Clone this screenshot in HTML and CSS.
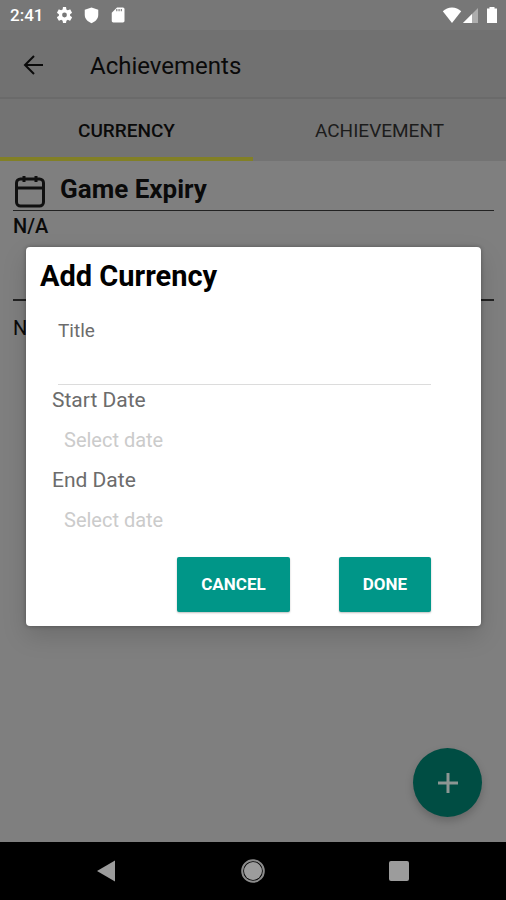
FILE: index.html
```html
<!DOCTYPE html>
<html lang="en">
<head>
<meta charset="utf-8">
<meta name="viewport" content="width=device-width, initial-scale=1">
<title>Achievements</title>
<link rel="stylesheet" href="styles.css">
</head>
<body>
<div class="screen">
  <div class="status">
    <span class="clock">2:41</span>
    <svg class="status-icon" viewBox="0 0 24 24" aria-hidden="true"><path d="M19.4 13c.1-.3.1-.7.1-1s0-.7-.1-1l2.400-1.800c.2-.2.300-.5.100-.7l-2.200-3.800c-.1-.2-.4-.3-.6-.2l-2.700 1.100c-.6-.4-1.200-.8-1.900-1.100L14.100 1.600c0-.2-.2-.4-.5-.4h-3.200c-.3 0-.5.2-.5.4L9.500 4.500c-.7.300-1.300.600-1.900 1.100L4.900 4.500c-.2-.1-.5 0-.6.2L2.100 8.500c-.1.200-.1.500.1.700L4.600 11c-.1.300-.1.700-.1 1s0 .7.1 1l-2.400 1.800c-.2.200-.3.500-.1.700l2.200 3.800c.1.200.4.300.6.200l2.700-1.100c.6.400 1.200.8 1.900 1.100l.4 2.900c0 .2.200.4.500.4h3.200c.3 0 .5-.2.500-.4l.4-2.900c.7-.3 1.300-.6 1.900-1.100l2.700 1.100c.2.100.5 0 .6-.2l2.200-3.800c.1-.2.1-.5-.1-.7zM12 15.200a3.200 3.200 0 1 1 0-6.400 3.200 3.200 0 0 1 0 6.400z" fill-rule="evenodd"/></svg>
    <svg class="status-icon" viewBox="0 0 24 24" aria-hidden="true"><path d="M12 2 3 5v7c0 5 4 9 9 11 5-2 9-6 9-11V5z"/></svg>
    <svg class="status-icon" viewBox="0 0 24 24" aria-hidden="true"><path d="M18 2h-8L3 9v11c0 1 1 2 2 2h13c1 0 2-1 2-2V4c0-1-1-2-2-2zM10.500 4v3H9V4zm3 0v3H12V4zm3 0v3H15V4z" fill-rule="evenodd"/></svg>
    <span class="spacer"></span>
    <svg class="wifi" viewBox="0 0 20 18" aria-hidden="true"><path d="M10 17 .8 5.300C3.300 3 6.500 1.500 10 1.500s6.700 1.500 9.200 3.800z"/></svg>
    <svg class="signal" viewBox="0 0 16 18" aria-hidden="true"><path d="M15 2v15H0z" opacity=".4"/><path d="M9 8v9H0z"/></svg>
    <svg class="battery" viewBox="0 0 12 18" aria-hidden="true"><path d="M1 2.500h2.500V1h5v1.500H11V17H1z"/></svg>
  </div>
  <header class="bar">
    <button class="back" aria-label="Back"><svg viewBox="0 0 24 24" aria-hidden="true"><path d="M21 12H4M12 3l-9 9 9 9"/></svg></button>
    <h1>Achievements</h1>
  </header>
  <nav class="tabs">
    <a class="tab active" href="#currency">CURRENCY</a>
    <a class="tab" href="#achievement">ACHIEVEMENT</a>
  </nav>
  <main class="content">
    <section id="currency">
      <div class="heading">
        <svg viewBox="0 0 30 32" aria-hidden="true"><rect x="1.500" y="3" width="27" height="27" rx="4"/><path d="M1.500 12h27M9 0v6M21 0v6"/></svg>
        <h2>Game Expiry</h2>
      </div>
      <p class="value">N/A</p>
    </section>
    <section class="next"><p class="plain">N/A</p></section>
    <button class="fab" aria-label="Add"><svg viewBox="0 0 20 20" aria-hidden="true"><path d="M10 0v20M0 10h20"/></svg></button>
  </main>
  <footer class="system">
    <button aria-label="System back"><svg viewBox="0 0 24 24" aria-hidden="true"><path d="M20 1.500v21L2 12z"/></svg></button>
    <button aria-label="Home"><svg viewBox="0 0 24 24" aria-hidden="true"><circle cx="12" cy="12" r="9"/><circle class="ring" cx="12" cy="12" r="10.800"/></svg></button>
    <button aria-label="Recent apps"><svg viewBox="0 0 24 24" aria-hidden="true"><rect x="2" y="2" width="20" height="20" rx="2"/></svg></button>
  </footer>
  <div class="overlay">
    <form class="dialog" role="dialog" aria-labelledby="dialog-title">
      <h2 id="dialog-title">Add Currency</h2>
      <div class="title-field">
        <label for="name">Title</label>
        <input id="name" type="text">
      </div>
      <div class="date-field">
        <label for="start">Start Date</label>
        <input id="start" type="text" placeholder="Select date">
      </div>
      <div class="date-field">
        <label for="end">End Date</label>
        <input id="end" type="text" placeholder="Select date">
      </div>
      <div class="actions">
        <button type="button">CANCEL</button>
        <button type="button">DONE</button>
      </div>
    </form>
  </div>
</div>
</body>
</html>
```
FILE: styles.css
```css
* { box-sizing: border-box; }
body { margin: 0; font-family: Roboto, "Liberation Sans", sans-serif; color: #0a0a0a; }
h1, h2, p { margin: 0; }
button { border: 0; padding: 0; background: none; font-family: inherit; }
svg { display: block; fill: none; }
.screen { position: relative; display: flex; flex-direction: column; min-height: 100vh; background: #7f7f7f; }

.status { display: flex; align-items: center; height: 30px; padding: 0 8px 0 10px; background: #777; color: #fff; }
.status svg { fill: #fff; }
.clock { width: 45px; font-size: 17px; font-weight: 500; line-height: 32px; }
.status-icon { width: 19px; height: 18px; margin-right: 8px; }
.spacer { flex: 1; }
.wifi { width: 20px; height: 18px; }
.signal { width: 16px; height: 18px; margin: 0 7px 0 1px; }
.battery { width: 12px; height: 18px; }

.bar { display: flex; align-items: center; height: 69px; padding: 2px 22px 0; background: #717171; border-bottom: 2px solid #6a6a6a; }
.back { width: 24px; height: 24px; margin-right: 44px; }
.back svg { width: 24px; height: 24px; stroke: #0a0a0a; stroke-width: 2; }
.bar h1 { padding-top: 2px; font-size: 24px; font-weight: 400; }

.tabs { display: flex; height: 62px; background: #737373; }
.tab { flex: 1; border-bottom: 4px solid transparent; font-size: 19px; line-height: 64px; text-align: center; text-decoration: none; color: #1c1c1c; }
.tab.active { border-color: #828026; font-weight: 500; color: #0a0a0a; }

.content { position: relative; flex: 1; padding: 12px 12px 0 13px; }
.heading { display: flex; align-items: center; height: 38px; padding: 0 2px; border-bottom: 1px solid #222; }
.heading svg { width: 30px; height: 32px; margin-right: 15px; stroke: #101010; stroke-width: 3; }
.heading h2 { padding-bottom: 6px; font-size: 26px; font-weight: 700; line-height: 30px; }
.value { font-size: 20px; font-weight: 500; line-height: 30px; }
.next { margin-top: 58px; padding-top: 12px; border-top: 2px solid #222; }
.plain { font-size: 20px; line-height: 30px; }
.fab { position: absolute; right: 24px; bottom: 25px; display: grid; place-items: center; width: 69px; height: 69px; border-radius: 50%; background: #004d43; box-shadow: 0 4px 8px rgba(0, 0, 0, .2); }
.fab svg { width: 20px; height: 20px; stroke: #8c9693; stroke-width: 3; }

.system { display: flex; align-items: center; justify-content: space-between; height: 58px; padding: 0 95px; background: #000; }
.system svg { width: 24px; height: 24px; fill: #9c9c9c; }
.system .ring { fill: none; stroke: #8c8c8c; stroke-width: 2; }

.overlay { position: absolute; inset: 30px 25px 58px 26px; display: flex; align-items: center; }
.dialog { width: 100%; padding-bottom: 14px; border-radius: 4px; background: #fff; box-shadow: 0 10px 24px rgba(0, 0, 0, .15), 0 0 4px rgba(0, 0, 0, .3); }
.dialog h2 { padding-left: 14px; font-size: 29px; font-weight: 700; line-height: 58px; color: #000; }
.dialog label { display: block; color: #6c6c6c; }
.dialog input { display: block; width: 100%; border: 0; outline: 0; background: none; font-family: inherit; font-size: 20px; color: #222; }
.title-field { margin: 12px 50px 0 32px; }
.title-field label { font-size: 19px; line-height: 28px; }
.title-field input { height: 40px; padding: 0; border-bottom: 1px solid #dcdcdc; }
.date-field { margin: 0 50px 0 26px; }
.date-field label { font-size: 21px; line-height: 30px; }
.date-field input { height: 50px; padding: 0 12px; }
.date-field input::placeholder { color: #cbcbcb; opacity: 1; }
.actions { display: flex; justify-content: flex-end; gap: 49px; padding: 12px 50px 0 0; }
.actions button { height: 55px; padding: 0 24px; border-radius: 2px; background: #009688; box-shadow: 0 1px 2px rgba(0, 0, 0, .25); font-size: 17px; font-weight: 700; color: #fff; }
```
